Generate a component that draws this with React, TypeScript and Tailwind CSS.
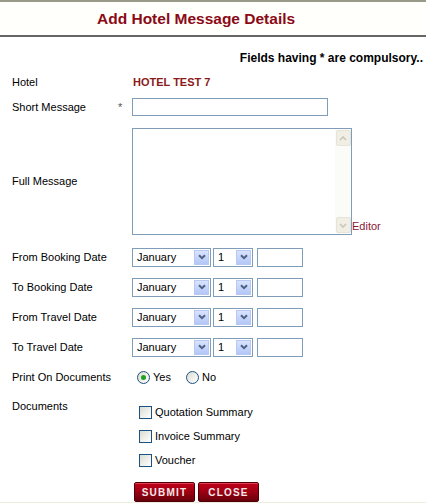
import React from "react";

const font = { fontFamily: '"Liberation Sans", Arial, sans-serif' };

// XP-style blue drop-down button
function DropArrow() {
  return (
    <span className="m-px flex h-[15px] w-[15px] shrink-0 items-center justify-center border border-[#b7c9f2] bg-gradient-to-b from-[#d9e3fd] to-[#b3c7f7]">
      <svg width="8" height="6" viewBox="0 0 8 6">
        <path d="M1 1.2 L4 4.2 L7 1.2" fill="none" stroke="#4d6185" strokeWidth="2" />
      </svg>
    </span>
  );
}

function Select({ value, width, options }: { value: string; width: string; options: string[] }) {
  return (
    <div className={`flex h-[19px] items-center border border-[#7f9db9] bg-white ${width}`}>
      <select
        defaultValue={value}
        className="h-full min-w-0 flex-1 appearance-none bg-transparent pl-[4px] text-[11px] text-black outline-none"
        style={font}
      >
        {options.map((o) => (
          <option key={o}>{o}</option>
        ))}
      </select>
      <DropArrow />
    </div>
  );
}

const months = [
  "January", "February", "March", "April", "May", "June",
  "July", "August", "September", "October", "November", "December",
];
const days = Array.from({ length: 31 }, (_, i) => String(i + 1));

function DateRow({ label }: { label: string }) {
  return (
    <div className="flex h-[30px] items-center">
      <div className="w-[132px] pl-[12px]">{label}</div>
      <div className="flex items-center">
        <Select value="January" width="w-[79px]" options={months} />
        <div className="w-[2px]" />
        <Select value="1" width="w-[40px]" options={days} />
        <div className="w-[4px]" />
        <input className="h-[19px] w-[46px] border border-[#7f9db9] bg-white outline-none" />
      </div>
    </div>
  );
}

function ScrollBtn({ up }: { up?: boolean }) {
  return (
    <span className="flex h-[16px] w-[15px] items-center justify-center rounded-[2px] border border-[#e6e4d8] bg-[#f1efe3]">
      <svg width="8" height="5" viewBox="0 0 8 5">
        <path
          d={up ? "M1 4 L4 1 L7 4" : "M1 1 L4 4 L7 1"}
          fill="none"
          stroke="#c9c7ba"
          strokeWidth="1.6"
        />
      </svg>
    </span>
  );
}

function Radio({ checked, label }: { checked?: boolean; label: string }) {
  return (
    <label className="flex items-center">
      <span className="flex h-[13px] w-[13px] items-center justify-center rounded-full border border-[#1c5180] bg-gradient-to-br from-[#dcdcd5] to-white">
        {checked && <span className="h-[5px] w-[5px] rounded-full bg-[#21a121]" />}
      </span>
      <span className="pl-[3px]">{label}</span>
    </label>
  );
}

function Check({ label }: { label: string }) {
  return (
    <label className="flex h-[24px] items-center pl-[19px]">
      <span className="h-[13px] w-[13px] border border-[#1c5180] bg-gradient-to-br from-[#dcdcd5] to-white" />
      <span className="pl-[3px]">{label}</span>
    </label>
  );
}

function Button({ children, width }: { children: React.ReactNode; width: string }) {
  return (
    <button
      className={`h-[20px] ${width} rounded-[2px] border border-[#4d0008] bg-gradient-to-b from-[#c2001c] via-[#9c0012] to-[#68000b] text-[10px] font-bold tracking-[1.2px] text-[#f4e8ea] shadow-[inset_0_1px_0_#e04050]`}
      style={font}
    >
      {children}
    </button>
  );
}

export default function App() {
  return (
    <div className="h-[503px] w-[426px] overflow-hidden bg-white text-[11px] text-black" style={font}>
      <div className="h-[2px] bg-[#9a9a8a]" />
      <div className="flex h-[33px] items-center bg-[#fffffb] pl-[97px]">
        <h1 className="text-[15.5px] font-bold text-[#8b0a16]">Add Hotel Message Details</h1>
      </div>
      <div className="h-[2px] bg-[#666666]" />

      <div className="mt-[14px] h-[14px] pr-[3px] text-right text-[12px] font-bold leading-[14px]">
        Fields having * are compulsory..
      </div>

      <div className="mt-[7px] flex h-[20px] items-center">
        <div className="w-[133px] pl-[12px]">Hotel</div>
        <div className="font-bold text-[#8b1a1a]">HOTEL TEST 7</div>
      </div>

      <div className="mt-[6px] flex h-[18px] items-center">
        <div className="w-[118px] pl-[12px]">Short Message</div>
        <div className="w-[14px] text-[#555]">*</div>
        <input className="h-[18px] w-[196px] border border-[#7f9db9] bg-white outline-none" />
      </div>

      <div className="mt-[12px] flex h-[107px] items-center">
        <div className="w-[132px] pl-[12px]">Full Message</div>
        <div className="flex h-full items-end">
          <div className="flex h-full w-[220px] border border-[#7f9db9] bg-white">
            <textarea className="h-full flex-1 resize-none overflow-hidden bg-white outline-none" />
            <div className="flex w-[16px] flex-col items-center justify-between bg-[#fbfbf7] py-px">
              <ScrollBtn up />
              <ScrollBtn />
            </div>
          </div>
          <a className="pb-[1px] text-[11px] text-[#8b1538]">Editor</a>
        </div>
      </div>

      <div className="mt-[7px]">
        <DateRow label="From Booking Date" />
        <DateRow label="To Booking Date" />
        <DateRow label="From Travel Date" />
        <DateRow label="To Travel Date" />
      </div>

      <div className="flex h-[30px] items-center">
        <div className="w-[137px] pl-[12px]">Print On Documents</div>
        <div className="flex items-center gap-[16px]">
          <Radio checked label="Yes" />
          <div className="-ml-[1px]">
            <Radio label="No" />
          </div>
        </div>
      </div>

      <div className="flex">
        <div className="w-[120px] pl-[12px] pt-[8px] leading-[13px]">Documents</div>
        <div className="pt-[8px]">
          <Check label="Quotation Summary" />
          <Check label="Invoice Summary" />
          <Check label="Voucher" />
        </div>
      </div>

      <div className="mt-[10px] flex gap-[3px] pl-[134px]">
        <Button width="w-[61px]">SUBMIT</Button>
        <Button width="w-[61px]">CLOSE</Button>
      </div>
      <div className="h-px bg-[#eeeedc]" />
    </div>
  );
}
